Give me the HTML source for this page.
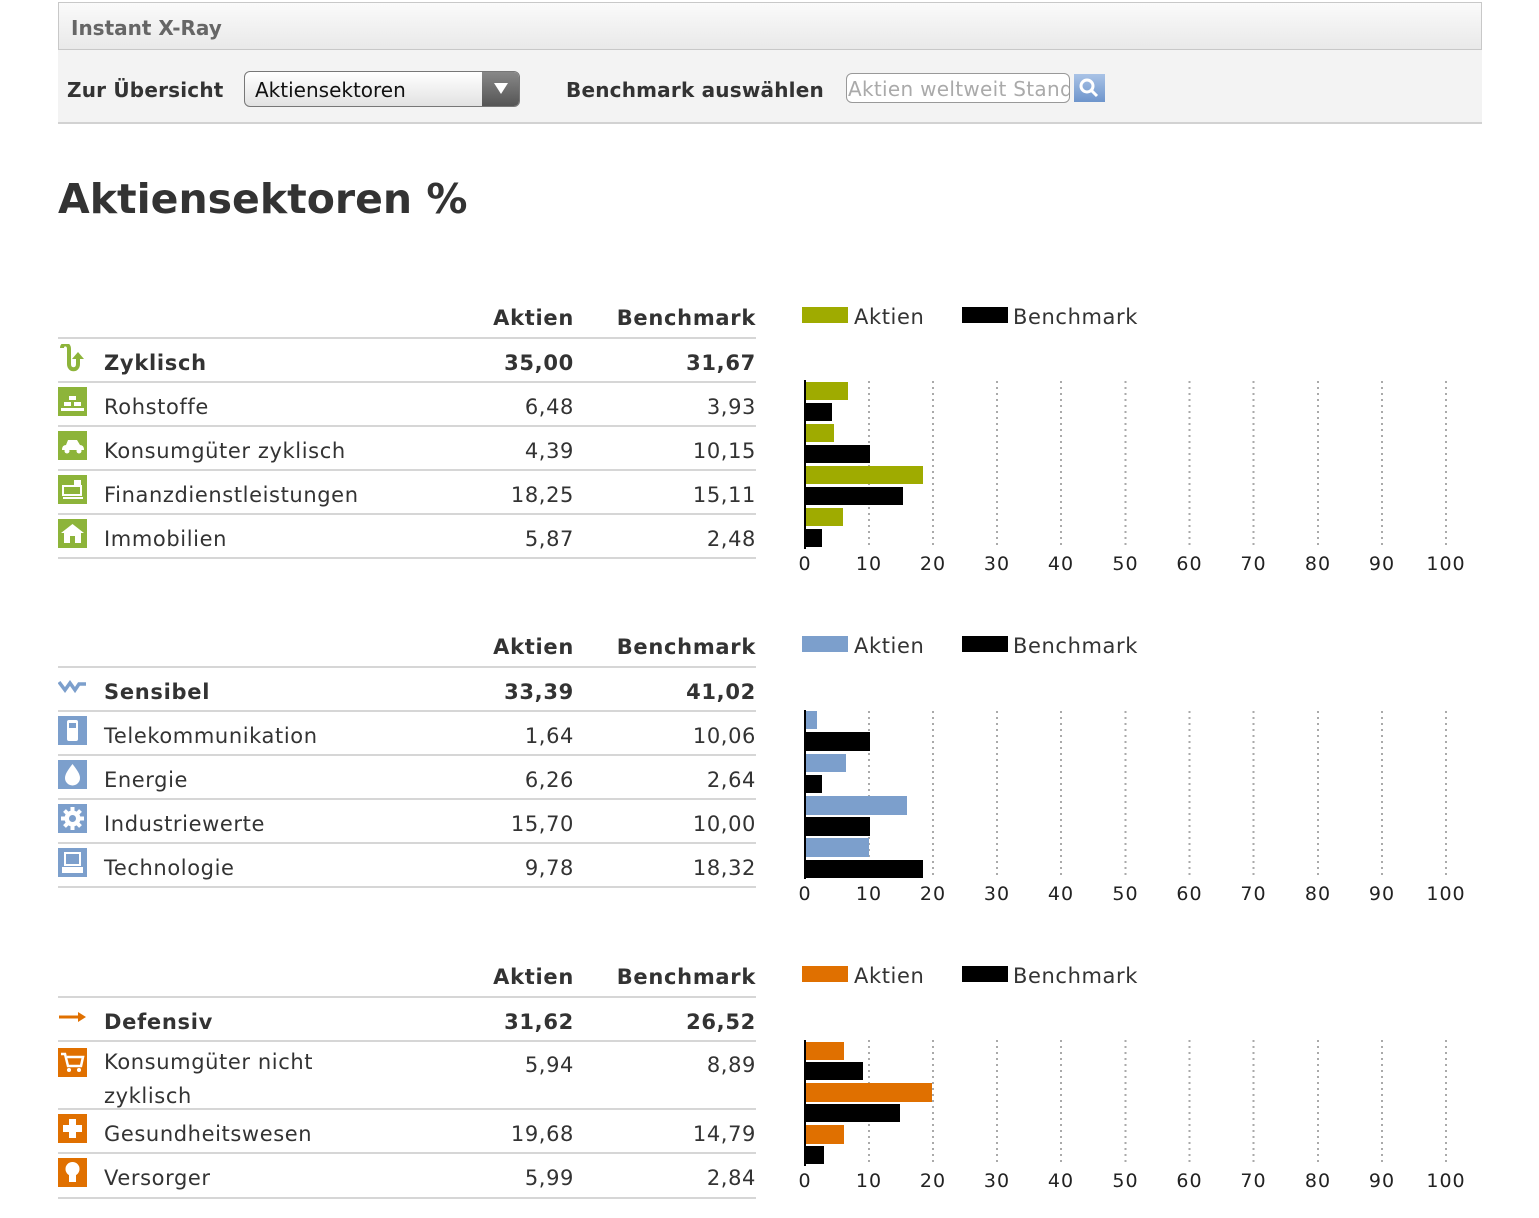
<!DOCTYPE html>
<html><head><meta charset="utf-8"><style>
*{margin:0;padding:0;box-sizing:border-box}
body{width:1539px;height:1218px;background:#fff;position:relative;overflow:hidden;font-family:"DejaVu Sans","Liberation Sans",sans-serif;color:#333}
.a{position:absolute}
.hdr{left:58px;top:2px;width:1424px;height:48px;border:1px solid #c8c8c8;background:linear-gradient(#fafafa,#e9e9e9);font-weight:bold;color:#666;font-size:20px;padding:13px 0 0 12px}
.bar{left:58px;top:50px;width:1424px;height:74px;background:#f3f3f3;border-bottom:2px solid #d2d2d2}
.lbl{font-weight:bold;font-size:20px;color:#333;letter-spacing:0.2px}
.sel{left:244px;top:71px;width:276px;height:36px;border:1px solid #777;border-radius:6px;background:linear-gradient(#fff,#e2e2e2);font-size:20px;color:#111;padding:6px 0 0 10px;overflow:hidden}
.sel .btn{position:absolute;right:0;top:0;width:37px;height:34px;background:linear-gradient(#888,#555)}
.sel .btn:after{content:"";position:absolute;left:12px;top:11px;border-left:7px solid transparent;border-right:7px solid transparent;border-top:11px solid #fff}
.inp{left:846px;top:73px;width:224px;height:30px;border:1px solid #999;border-radius:6px;background:#fff;font-size:20px;color:#aaa;padding:3px 0 0 1px;white-space:nowrap;overflow:hidden;letter-spacing:0.3px}
.sb{left:1074px;top:74px;width:31px;height:28px;background:linear-gradient(#a9c3e6,#6e95cc)}
h1{position:absolute;left:58px;top:175px;font-size:41px;font-weight:bold;color:#333}
.r{position:absolute;left:58px;width:698px;border-bottom:2px solid #d6d6d6;font-size:21px;color:#333;letter-spacing:0.6px}
.r span{position:absolute}
.r .t{left:46px}
.r .v1{right:182px;text-align:right}
.r .v2{right:0;text-align:right}
.b{font-weight:bold;letter-spacing:0.7px}
.ic{position:absolute;left:0;width:29px;height:29px}
</style></head><body>
<div class="a hdr">Instant X-Ray</div>
<div class="a bar"></div>
<div class="a lbl" style="left:67px;top:78px">Zur Übersicht</div>
<div class="a sel">Aktiensektoren<div class="btn"></div></div>
<div class="a lbl" style="left:566px;top:78px">Benchmark auswählen</div>
<div class="a inp">Aktien weltweit Stand</div>
<div class="a sb"><svg width="31" height="28"><circle cx="13" cy="12" r="6" fill="none" stroke="#fff" stroke-width="3"/><line x1="17" y1="16" x2="23" y2="22" stroke="#fff" stroke-width="3"/></svg></div>
<h1>Aktiensektoren %</h1>

<!-- Section 1 -->
<div class="r b" style="top:296px;height:43px"><span class="v1" style="top:10px">Aktien</span><span class="v2" style="top:10px">Benchmark</span></div>
<div class="r b" style="top:339px;height:44px"><svg class="ic" style="top:5px" viewBox="0 0 29 29"><path d="M4 4 C4 -1 11 -1 11 5 L11 20 C11 27 20 27 20 20 L20 13" fill="none" stroke="#8db43a" stroke-width="4"/><path d="M14 15 L20 8 L26 15Z" fill="#8db43a"/></svg><span class="t" style="top:12px">Zyklisch</span><span class="v1" style="top:12px">35,00</span><span class="v2" style="top:12px">31,67</span></div>
<div class="r" style="top:383px;height:44px"><div class="ic" style="top:4px;background:#8db43a"><svg width="29" height="29"><path d="M11 9h7v4h-7zM6 15h7v4H6zM16 15h7v4h-7zM3 21h23v3H3z" fill="#fff"/></svg></div><span class="t" style="top:12px">Rohstoffe</span><span class="v1" style="top:12px">6,48</span><span class="v2" style="top:12px">3,93</span></div>
<div class="r" style="top:427px;height:44px"><div class="ic" style="top:4px;background:#8db43a"><svg width="29" height="29"><path d="M4 19 Q4 14 8 14 L10 9 H19 L22 14 Q26 14 26 19 Z" fill="#fff"/><circle cx="9" cy="20" r="2.5" fill="#fff"/><circle cx="21" cy="20" r="2.5" fill="#fff"/></svg></div><span class="t" style="top:12px">Konsumgüter zyklisch</span><span class="v1" style="top:12px">4,39</span><span class="v2" style="top:12px">10,15</span></div>
<div class="r" style="top:471px;height:44px"><div class="ic" style="top:4px;background:#8db43a"><svg width="29" height="29"><rect x="5" y="11" width="18" height="9" fill="none" stroke="#fff" stroke-width="2"/><rect x="16" y="5" width="7" height="7" fill="#fff"/><path d="M5 23h20" stroke="#fff" stroke-width="2"/></svg></div><span class="t" style="top:12px">Finanzdienstleistungen</span><span class="v1" style="top:12px">18,25</span><span class="v2" style="top:12px">15,11</span></div>
<div class="r" style="top:515px;height:44px"><div class="ic" style="top:4px;background:#8db43a"><svg width="29" height="29"><path d="M3 14 L14.5 5 L26 14 H23 V24 H6 V14Z" fill="#fff"/><rect x="12" y="17" width="5" height="7" fill="#8db43a"/></svg></div><span class="t" style="top:12px">Immobilien</span><span class="v1" style="top:12px">5,87</span><span class="v2" style="top:12px">2,48</span></div>

<!-- Section 2 -->
<div class="r b" style="top:625px;height:43px"><span class="v1" style="top:10px">Aktien</span><span class="v2" style="top:10px">Benchmark</span></div>
<div class="r b" style="top:668px;height:44px"><svg class="ic" style="top:4px" viewBox="0 0 29 29"><path d="M1 10 L7 18 L12 11 L17 18 L21 12 L28 12" fill="none" stroke="#7c9fcc" stroke-width="3.5"/></svg><span class="t" style="top:12px">Sensibel</span><span class="v1" style="top:12px">33,39</span><span class="v2" style="top:12px">41,02</span></div>
<div class="r" style="top:712px;height:44px"><div class="ic" style="top:4px;background:#7c9fcc"><svg width="29" height="29"><rect x="9" y="4" width="11" height="21" rx="2" fill="#fff"/><rect x="11" y="7" width="7" height="5" fill="#7c9fcc"/></svg></div><span class="t" style="top:12px">Telekommunikation</span><span class="v1" style="top:12px">1,64</span><span class="v2" style="top:12px">10,06</span></div>
<div class="r" style="top:756px;height:44px"><div class="ic" style="top:4px;background:#7c9fcc"><svg width="29" height="29"><path d="M14.5 4 C19 10 22 14 22 18 A7.5 7.5 0 0 1 7 18 C7 14 10 10 14.5 4Z" fill="#fff"/></svg></div><span class="t" style="top:12px">Energie</span><span class="v1" style="top:12px">6,26</span><span class="v2" style="top:12px">2,64</span></div>
<div class="r" style="top:800px;height:44px"><div class="ic" style="top:4px;background:#7c9fcc"><svg width="29" height="29"><circle cx="14.5" cy="14.5" r="8" fill="#fff"/><path d="M14.5 3v23M3 14.5h23M6.5 6.5l16 16M22.5 6.5l-16 16" stroke="#fff" stroke-width="4"/><circle cx="14.5" cy="14.5" r="3.5" fill="#7c9fcc"/></svg></div><span class="t" style="top:12px">Industriewerte</span><span class="v1" style="top:12px">15,70</span><span class="v2" style="top:12px">10,00</span></div>
<div class="r" style="top:844px;height:44px"><div class="ic" style="top:4px;background:#7c9fcc"><svg width="29" height="29"><rect x="6" y="4" width="17" height="14" fill="#fff"/><rect x="8" y="6" width="13" height="10" fill="#7c9fcc"/><rect x="4" y="19" width="21" height="6" fill="#fff"/></svg></div><span class="t" style="top:12px">Technologie</span><span class="v1" style="top:12px">9,78</span><span class="v2" style="top:12px">18,32</span></div>

<!-- Section 3 -->
<div class="r b" style="top:955px;height:43px"><span class="v1" style="top:10px">Aktien</span><span class="v2" style="top:10px">Benchmark</span></div>
<div class="r b" style="top:998px;height:44px"><svg class="ic" style="top:6px" viewBox="0 0 29 29"><path d="M1 13h22" stroke="#e07000" stroke-width="3"/><path d="M20 8 L28 13 L20 18Z" fill="#e07000"/></svg><span class="t" style="top:12px">Defensiv</span><span class="v1" style="top:12px">31,62</span><span class="v2" style="top:12px">26,52</span></div>
<div class="r" style="top:1042px;height:68px"><div class="ic" style="top:6px;background:#e07000"><svg width="29" height="29"><path d="M3 6h4l3 12h13l2-9H9" fill="none" stroke="#fff" stroke-width="2.5"/><circle cx="11" cy="22" r="2" fill="#fff"/><circle cx="21" cy="22" r="2" fill="#fff"/></svg></div><span class="t" style="top:3px;line-height:34px">Konsumgüter nicht<br>zyklisch</span><span class="v1" style="top:11px">5,94</span><span class="v2" style="top:11px">8,89</span></div>
<div class="r" style="top:1110px;height:44px"><div class="ic" style="top:4px;background:#e07000"><svg width="29" height="29"><path d="M11 5h7v6h6v7h-6v6h-7v-6H5v-7h6z" fill="#fff"/></svg></div><span class="t" style="top:12px">Gesundheitswesen</span><span class="v1" style="top:12px">19,68</span><span class="v2" style="top:12px">14,79</span></div>
<div class="r" style="top:1154px;height:45px"><div class="ic" style="top:4px;background:#e07000"><svg width="29" height="29"><circle cx="14.5" cy="11" r="7" fill="#fff"/><rect x="11" y="16" width="7" height="8" fill="#fff"/></svg></div><span class="t" style="top:12px">Versorger</span><span class="v1" style="top:12px">5,99</span><span class="v2" style="top:12px">2,84</span></div>

<svg class="a" style="left:0;top:0" width="1539" height="1218" font-family="DejaVu Sans, Liberation Sans, sans-serif">
<g font-size="21" fill="#333" letter-spacing="0.6">
<rect x="802" y="307" width="46" height="16" fill="#9fab00"/><text x="854" y="324">Aktien</text>
<rect x="962" y="307" width="46" height="16" fill="#000"/><text x="1013" y="324">Benchmark</text>
<rect x="802" y="636" width="46" height="16" fill="#7c9fcc"/><text x="854" y="653">Aktien</text>
<rect x="962" y="636" width="46" height="16" fill="#000"/><text x="1013" y="653">Benchmark</text>
<rect x="802" y="966" width="46" height="16" fill="#e07000"/><text x="854" y="983">Aktien</text>
<rect x="962" y="966" width="46" height="16" fill="#000"/><text x="1013" y="983">Benchmark</text>
</g>
<g stroke="#aaa" stroke-width="2" stroke-dasharray="2,4">
<path d="M869 381V548M933 381V548M997 381V548M1061 381V548M1125.5 381V548M1189.5 381V548M1253.5 381V548M1318 381V548M1382 381V548M1446 381V548"/>
<path d="M869 711V878M933 711V878M997 711V878M1061 711V878M1125.5 711V878M1189.5 711V878M1253.5 711V878M1318 711V878M1382 711V878M1446 711V878"/>
<path d="M869 1040V1166M933 1040V1166M997 1040V1166M1061 1040V1166M1125.5 1040V1166M1189.5 1040V1166M1253.5 1040V1166M1318 1040V1166M1382 1040V1166M1446 1040V1166"/>
</g>
<g>
<rect x="805" y="382" width="43" height="18" fill="#9fab00"/>
<rect x="805" y="403" width="27" height="18" fill="#000"/>
<rect x="805" y="424" width="29" height="18" fill="#9fab00"/>
<rect x="805" y="445" width="65" height="18" fill="#000"/>
<rect x="805" y="466" width="118" height="18" fill="#9fab00"/>
<rect x="805" y="487" width="98" height="18" fill="#000"/>
<rect x="805" y="508" width="38" height="18" fill="#9fab00"/>
<rect x="805" y="529" width="17" height="18" fill="#000"/>

<rect x="805" y="711" width="12" height="18" fill="#7c9fcc"/>
<rect x="805" y="732" width="65" height="19" fill="#000"/>
<rect x="805" y="754" width="41" height="18" fill="#7c9fcc"/>
<rect x="805" y="775" width="17" height="18" fill="#000"/>
<rect x="805" y="796" width="102" height="19" fill="#7c9fcc"/>
<rect x="805" y="817" width="65" height="19" fill="#000"/>
<rect x="805" y="838" width="64" height="19" fill="#7c9fcc"/>
<rect x="805" y="860" width="118" height="18" fill="#000"/>

<rect x="805" y="1042" width="39" height="18" fill="#e07000"/>
<rect x="805" y="1062" width="58" height="18" fill="#000"/>
<rect x="805" y="1083" width="127" height="19" fill="#e07000"/>
<rect x="805" y="1104" width="95" height="18" fill="#000"/>
<rect x="805" y="1125" width="39" height="19" fill="#e07000"/>
<rect x="805" y="1146" width="19" height="18" fill="#000"/>
</g>
<g stroke="#000" stroke-width="2"><path d="M805 380V549M805 710V879M805 1040V1166"/></g>
<g font-size="19" fill="#222" text-anchor="middle" letter-spacing="1">
<text x="805" y="570">0</text><text x="869" y="570">10</text><text x="933" y="570">20</text><text x="997" y="570">30</text><text x="1061" y="570">40</text><text x="1125.5" y="570">50</text><text x="1189.5" y="570">60</text><text x="1253.5" y="570">70</text><text x="1318" y="570">80</text><text x="1382" y="570">90</text><text x="1446" y="570">100</text>
<text x="805" y="900">0</text><text x="869" y="900">10</text><text x="933" y="900">20</text><text x="997" y="900">30</text><text x="1061" y="900">40</text><text x="1125.5" y="900">50</text><text x="1189.5" y="900">60</text><text x="1253.5" y="900">70</text><text x="1318" y="900">80</text><text x="1382" y="900">90</text><text x="1446" y="900">100</text>
<text x="805" y="1187">0</text><text x="869" y="1187">10</text><text x="933" y="1187">20</text><text x="997" y="1187">30</text><text x="1061" y="1187">40</text><text x="1125.5" y="1187">50</text><text x="1189.5" y="1187">60</text><text x="1253.5" y="1187">70</text><text x="1318" y="1187">80</text><text x="1382" y="1187">90</text><text x="1446" y="1187">100</text>
</g>
</svg>
</body></html>
